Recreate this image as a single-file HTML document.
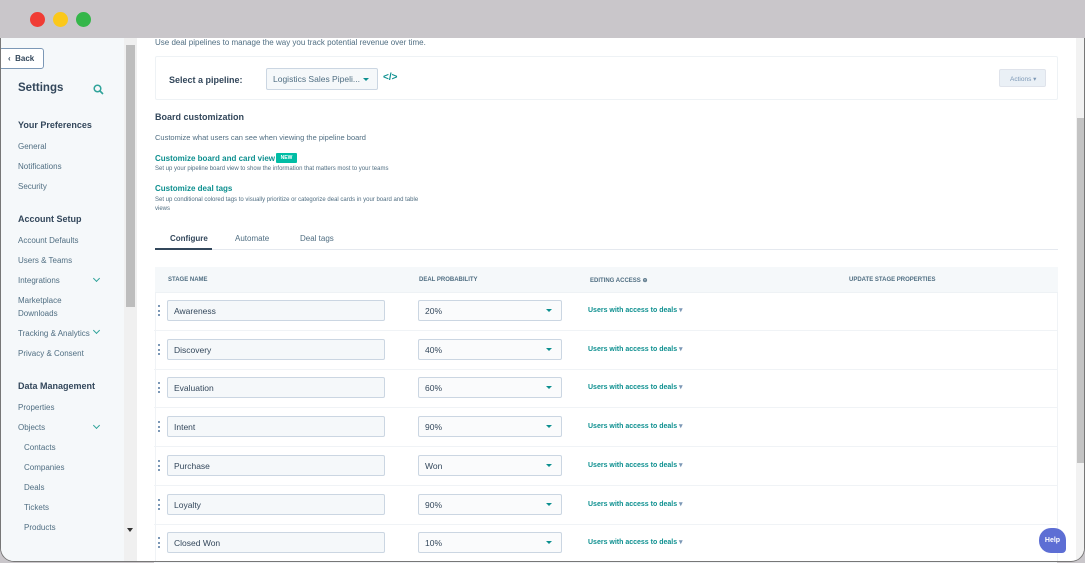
<!DOCTYPE html>
<html><head><style>
*{box-sizing:border-box;margin:0;padding:0}
body{width:1085px;height:562px;overflow:hidden;background:#c9c6ca;font-family:"Liberation Sans",sans-serif;position:relative}
.win{position:absolute;left:0;top:38px;width:1085px;height:524px;background:#fff;border-radius:0 0 14px 14px;border:1px solid #777;border-top:none;overflow:hidden}
.dot{position:absolute;top:12px;width:15px;height:15px;border-radius:50%}
.side{position:absolute;left:0;top:0;width:123px;height:524px;background:#f5f8fa}
.sb{position:absolute;left:123px;top:0;width:13px;height:524px;background:#f0f0f0}
.sb i{position:absolute;left:2px;top:7px;width:9px;height:262px;background:#bdbdbd}
.t{position:absolute;font-size:8px;color:#506e82;white-space:nowrap}
.h{position:absolute;font-size:9px;font-weight:bold;color:#33475b;white-space:nowrap}
.chev{position:absolute;width:5px;height:5px;border-right:1.5px solid #2fa39a;border-bottom:1.5px solid #2fa39a;transform:rotate(45deg)}
.main{position:absolute;left:136px;top:0;width:939px;height:524px}
.link{color:#0c8f8f;font-weight:bold}
.in{position:absolute;height:21px;border:1px solid #cbd6e2;background:#f5f8fa;border-radius:2px;font-size:8.5px;color:#33475b;padding:5px 6px}
.grip{position:absolute;width:2px;height:11px;border-left:2px dotted #7c98b6}
.caret{position:absolute;width:0;height:0;border-left:3px solid transparent;border-right:3px solid transparent;border-top:3px solid #0c8f8f}
.rs{position:absolute;left:1075px;top:0;width:10px;height:524px;background:#f2f2f2}
.rs i{position:absolute;left:1px;top:80px;width:8px;height:345px;background:#c3c3c3}
</style></head><body>
<div class="dot" style="left:30px;background:#f03c35"></div>
<div class="dot" style="left:53px;background:#fbc81b"></div>
<div class="dot" style="left:76px;background:#35b64a"></div>
<div class="win">
<div class="side">
<div style="position:absolute;left:-2px;top:10px;width:45px;height:21px;border:1px solid #7c98b6;border-radius:3px;background:#fff;font-size:8px;font-weight:bold;color:#33475b;padding:5px 0 0 8px">‹&nbsp; Back</div>
<div style="position:absolute;left:17px;top:44px;font-size:11.5px;font-weight:bold;color:#33475b">Settings</div>
<svg style="position:absolute;left:92px;top:46px" width="11" height="11" viewBox="0 0 11 11"><circle cx="4.5" cy="4.5" r="3.3" fill="none" stroke="#2fa39a" stroke-width="1.5"/><path d="M7 7l3 3" stroke="#2fa39a" stroke-width="1.6"/></svg>
<div class="h" style="left:17px;top:82px">Your Preferences</div>
<div class="t" style="left:17px;top:104px">General</div>
<div class="t" style="left:17px;top:124px">Notifications</div>
<div class="t" style="left:17px;top:144px">Security</div>
<div class="h" style="left:17px;top:176px">Account Setup</div>
<div class="t" style="left:17px;top:198px">Account Defaults</div>
<div class="t" style="left:17px;top:218px">Users &amp; Teams</div>
<div class="t" style="left:17px;top:238px">Integrations</div><div class="chev" style="left:93px;top:238px"></div>
<div class="t" style="left:17px;top:258px">Marketplace</div>
<div class="t" style="left:17px;top:271px">Downloads</div>
<div class="t" style="left:17px;top:291px">Tracking &amp; Analytics</div><div class="chev" style="left:93px;top:290px"></div>
<div class="t" style="left:17px;top:311px">Privacy &amp; Consent</div>
<div class="h" style="left:17px;top:343px">Data Management</div>
<div class="t" style="left:17px;top:365px">Properties</div>
<div class="t" style="left:17px;top:385px">Objects</div><div class="chev" style="left:93px;top:385px"></div>
<div class="t" style="left:23px;top:405px">Contacts</div>
<div class="t" style="left:23px;top:425px">Companies</div>
<div class="t" style="left:23px;top:445px">Deals</div>
<div class="t" style="left:23px;top:465px">Tickets</div>
<div class="t" style="left:23px;top:485px">Products</div>
</div>
<div class="sb"><i></i></div>
<div style="position:absolute;left:126px;top:490px;border-left:3px solid transparent;border-right:3px solid transparent;border-top:4px solid #333"></div>
<div class="main">
<div class="t" style="left:18px;top:0px">Use deal pipelines to manage the way you track potential revenue over time.</div>
<div style="position:absolute;left:18px;top:18px;width:903px;height:44px;border:1px solid #eef2f5;border-radius:2px"></div>
<div class="h" style="left:32px;top:37px">Select a pipeline:</div>
<div class="in" style="left:129px;top:30px;width:112px;height:22px;color:#506e82">Logistics Sales Pipeli...</div>
<div class="caret" style="left:226px;top:40px"></div>
<div style="position:absolute;left:246px;top:34px;font-size:10px;font-weight:bold;color:#0c8f8f">&lt;/&gt;</div>
<div style="position:absolute;left:862px;top:31px;width:47px;height:18px;background:#eaf0f6;border:1px solid #dfe3eb;border-radius:2px;font-size:6.5px;color:#7c98b6;padding:5px 0 0 10px">Actions ▾</div>
<div class="h" style="left:18px;top:74px">Board customization</div>
<div class="t" style="left:18px;top:95px;font-size:7.5px">Customize what users can see when viewing the pipeline board</div>
<div class="t link" style="left:18px;top:116px">Customize board and card view</div>
<div style="position:absolute;left:139px;top:115px;width:21px;height:10px;background:#00bda5;color:#fff;font-size:5px;font-weight:bold;text-align:center;line-height:10px;border-radius:1px">NEW</div>
<div class="t" style="left:18px;top:128px;font-size:6px">Set up your pipeline board view to show the information that matters most to your teams</div>
<div class="t link" style="left:18px;top:146px">Customize deal tags</div>
<div class="t" style="left:18px;top:159px;font-size:6px">Set up conditional colored tags to visually prioritize or categorize deal cards in your board and table</div>
<div class="t" style="left:18px;top:168px;font-size:6px">views</div>
<div class="t" style="left:33px;top:196px;color:#33475b;font-weight:bold">Configure</div>
<div class="t" style="left:98px;top:196px">Automate</div>
<div class="t" style="left:163px;top:196px">Deal tags</div>
<div style="position:absolute;left:18px;top:211px;width:903px;height:1px;background:#e5e9ef"></div>
<div style="position:absolute;left:18px;top:210px;width:57px;height:2px;background:#33475b"></div>
<div style="position:absolute;left:18px;top:229px;width:903px;height:26px;background:#f5f8fa;border-bottom:1px solid #eef2f5"></div>
<div class="t" style="left:31px;top:239px;font-size:6px;font-weight:bold">STAGE NAME</div>
<div class="t" style="left:282px;top:239px;font-size:6px;font-weight:bold">DEAL PROBABILITY</div>
<div class="t" style="left:453px;top:239px;font-size:6px;font-weight:bold">EDITING ACCESS ⊕</div>
<div class="t" style="left:712px;top:239px;font-size:6px;font-weight:bold">UPDATE STAGE PROPERTIES</div>
<div style="position:absolute;left:18px;top:255px;width:1px;height:269px;background:#f0f3f6"></div>
<div style="position:absolute;left:920px;top:255px;width:1px;height:269px;background:#f0f3f6"></div>
</div>
<div class="rs"><i></i></div>
<div style="position:absolute;left:1038px;top:490px;width:27px;height:25px;background:#5d6ed4;border-radius:12px 12px 4px 12px;color:#fff;font-size:7px;font-weight:bold;text-align:center;line-height:25px">Help</div>
</div>
<div id="rows"></div>
<script>
var d=[["Awareness","20%"],["Discovery","40%"],["Evaluation","60%"],["Intent","90%"],["Purchase","Won"],["Loyalty","90%"],["Closed Won","10%"]];
var h="";d.forEach(function(r,i){var y=38+262+i*38.7;
h+='<div class="grip" style="left:158px;top:'+(y+5)+'px"></div>';
h+='<div class="in" style="left:167px;top:'+y+'px;width:218px">'+r[0]+'</div>';
h+='<div class="in" style="left:418px;top:'+y+'px;width:144px;background:#fafbfc">'+r[1]+'</div>';
h+='<div class="caret" style="left:546px;top:'+(y+9)+'px"></div>';
h+='<div class="t link" style="left:588px;top:'+(y+6)+'px;font-size:7px">Users with access to deals <span style="color:#7c98b6">▾</span></div>';
h+='<div style="position:absolute;left:154px;top:'+(y+30)+'px;width:903px;height:1px;background:#f0f3f6"></div>';});
document.getElementById("rows").innerHTML=h;
</script>
</body></html>
